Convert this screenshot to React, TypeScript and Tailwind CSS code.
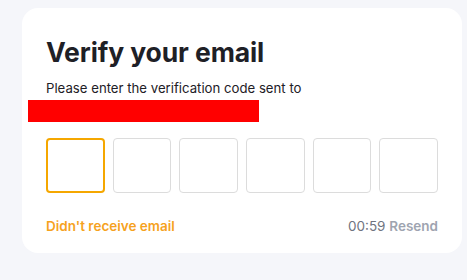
import React from "react";

const App = () => {
  const boxes = [0, 1, 2, 3, 4, 5];

  return (
    <div className="h-[280px] w-[467px] bg-[#f5f6fa] pt-[8px] pl-[22px] font-['Inter',sans-serif]">
      <div className="w-[440px] h-[245px] rounded-[16px] bg-white pl-[24px] pt-[27px]">
        {/* Heading */}
        <h1 className="text-[26.5px] leading-[34px] font-bold text-[#1e2026] tracking-[-0.1px]">
          Verify your email
        </h1>
        <p className="mt-[10px] text-[13.2px] leading-[18px] text-[#1e2026]">
          Please enter the verification code sent to
        </p>
        {/* redacted address */}
        <div className="-ml-[18px] mt-[3px] h-[22px] w-[231px] bg-[#ff0000]" />

        {/* Code inputs */}
        <div className="mt-[16px] grid w-[392px] grid-cols-6 gap-2">
          {boxes.map((i) => (
            <div
              key={i}
              className={
                i === 0
                  ? "h-[55px] rounded-[4px] border-2 border-[#f5a700]"
                  : "h-[55px] rounded-[4px] border border-[#dcdcdc]"
              }
            />
          ))}
        </div>

        <div className="mt-[24px] flex w-[392px] items-center justify-between text-[13.5px] leading-[18px]">
          <span className="font-semibold text-[#f6a21e]">Didn't receive email</span>
          <span>
            <span className="text-[#6f7480]">00:59</span>{" "}
            <span className="font-semibold text-[#9ea4b0]">Resend</span>
          </span>
        </div>
      </div>
    </div>
  );
};

export default App;
